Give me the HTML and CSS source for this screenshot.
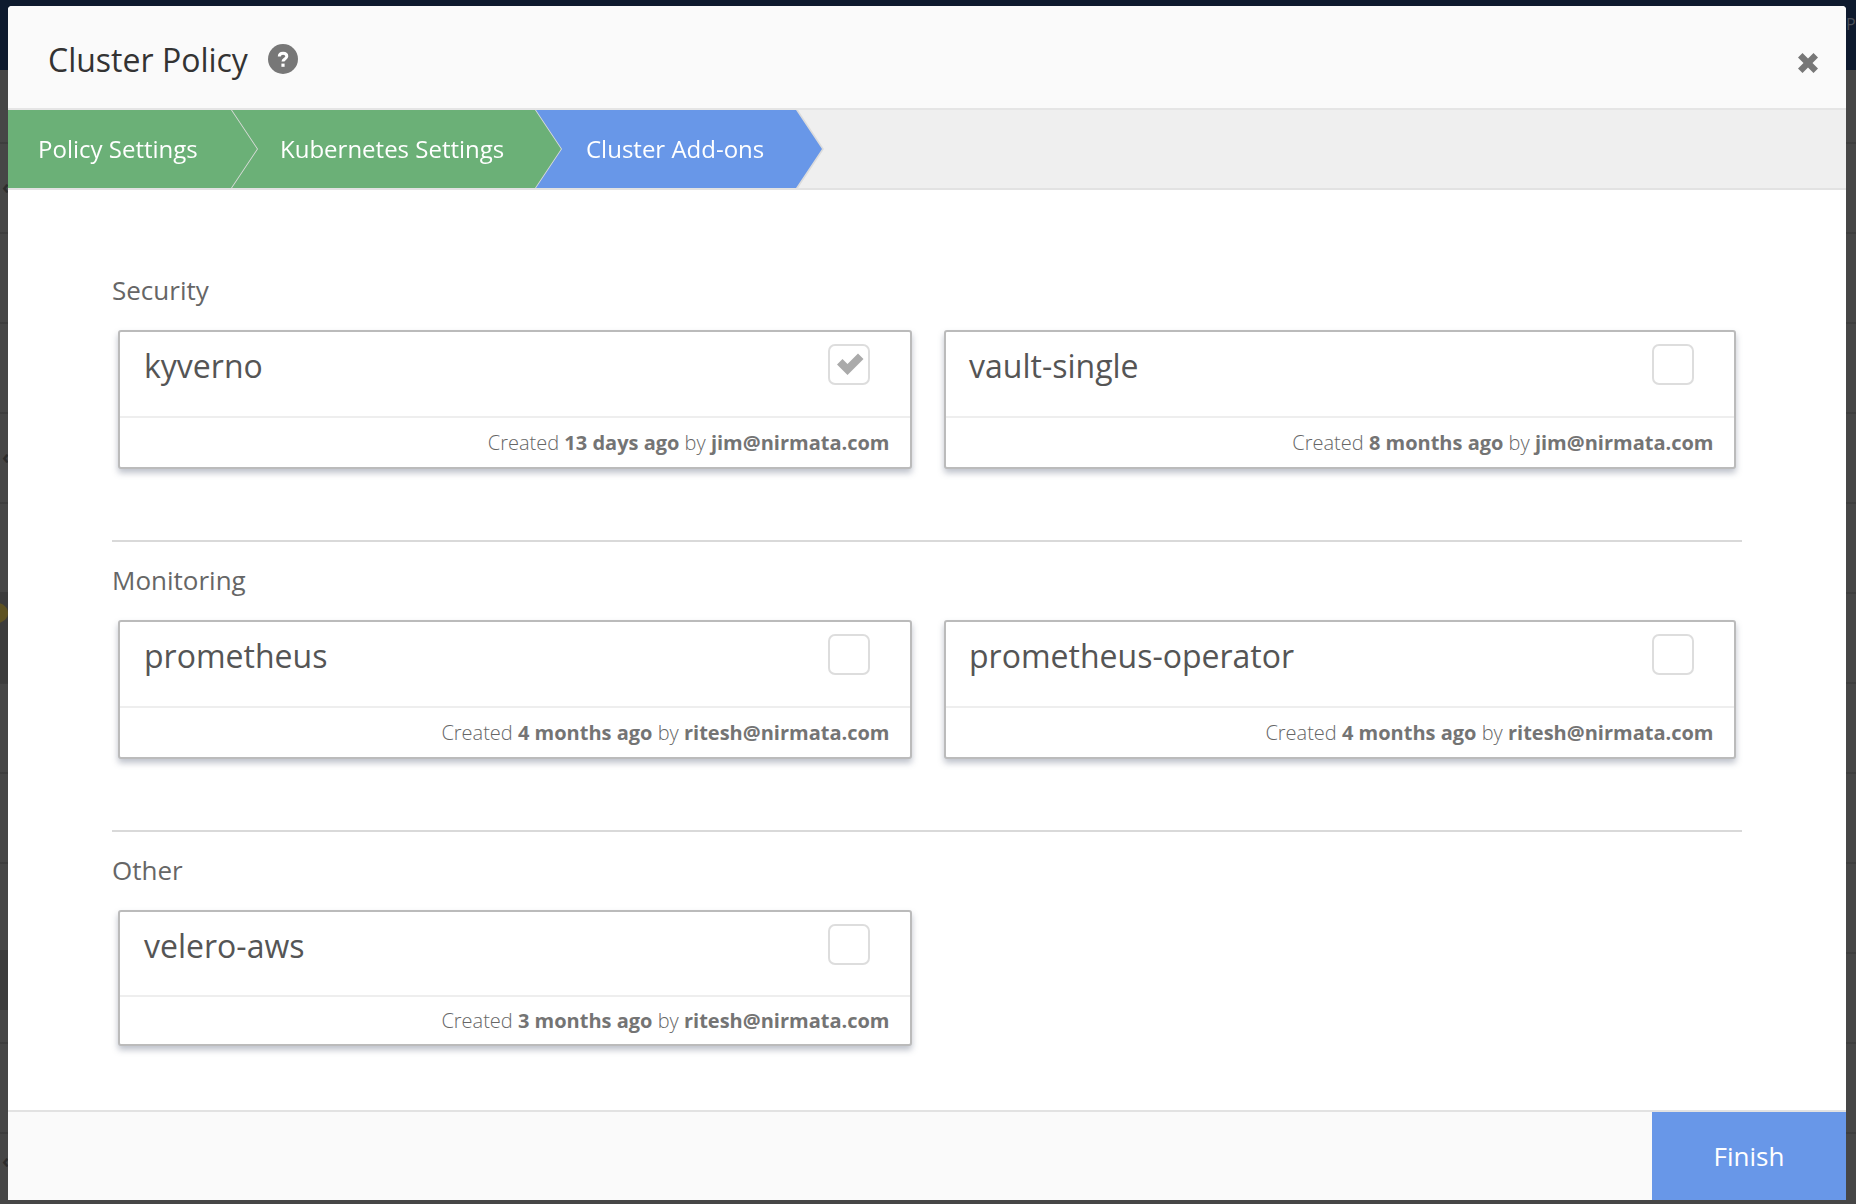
FILE: index.html
```html
<!DOCTYPE html>
<html lang="en">
<head>
    <meta charset="UTF-8">
    <meta name="viewport" content="width=device-width, initial-scale=1.0">
    <title>Cluster Policy</title>
    <link rel="stylesheet" href="styles.css">
</head>
<body>
    <div class="topbar"><span class="topbar-letter">P</span></div>
    <div class="backdrop">
        <div class="dot"></div>
        <span class="chevron chevron-a">‹</span>
        <span class="chevron chevron-b">‹</span>
        <span class="chevron chevron-c">‹</span>
    </div>

    <div class="modal">
        <div class="modal-header">
            <div class="modal-title">
                <h1>Cluster Policy</h1>
                <svg class="help-icon" width="30" height="30" viewBox="0 0 30 30">
                    <circle cx="15" cy="15" r="15" fill="#777777"/>
                    <path d="M11.300 12.600c0-2.100 1.600-3.300 3.800-3.300 2.100 0 3.700 1.100 3.700 3 0 2.700-3.800 2.600-3.800 5.200" fill="none" stroke="#ffffff" stroke-width="3"/>
                    <rect x="13.400" y="19.600" width="3.200" height="3.200" fill="#ffffff"/>
                </svg>
            </div>
            <svg class="close-icon" width="20" height="20" viewBox="0 0 20 20">
                <path d="M0 4.500l4.500-4.500 5.500 5.500 5.500-5.500 4.500 4.500-5.500 5.500 5.500 5.500-4.500 4.500-5.500-5.500-5.500 5.500-4.500-4.500 5.500-5.500z" fill="#777777"/>
            </svg>
        </div>

        <ul class="steps">
            <li class="step step-first"><span>Policy Settings</span></li>
            <li class="step step-second"><span>Kubernetes Settings</span></li>
            <li class="step step-active"><span>Cluster Add-ons</span></li>
        </ul>

        <div class="modal-body">
            <section class="group">
                <h2>Security</h2>
                <div class="cards">
                    <div class="card">
                        <div class="card-top">
                            <span class="card-name">kyverno</span>
                            <span class="checkbox">
                                <svg class="check-icon" width="27" height="22" viewBox="0 0 27 22">
                                    <path d="M0 11.500l5.500-5.500 5 5L21 .5l5.500 5.500L10.500 22z" fill="#aaaaaa"/>
                                </svg>
                            </span>
                        </div>
                        <div class="card-meta">Created <b>13 days ago</b> by <b>jim@nirmata.com</b></div>
                    </div>
                    <div class="card">
                        <div class="card-top">
                            <span class="card-name">vault-single</span>
                            <span class="checkbox"></span>
                        </div>
                        <div class="card-meta">Created <b>8 months ago</b> by <b>jim@nirmata.com</b></div>
                    </div>
                </div>
            </section>

            <section class="group">
                <h2>Monitoring</h2>
                <div class="cards">
                    <div class="card">
                        <div class="card-top">
                            <span class="card-name">prometheus</span>
                            <span class="checkbox"></span>
                        </div>
                        <div class="card-meta">Created <b>4 months ago</b> by <b>ritesh@nirmata.com</b></div>
                    </div>
                    <div class="card">
                        <div class="card-top">
                            <span class="card-name">prometheus-operator</span>
                            <span class="checkbox"></span>
                        </div>
                        <div class="card-meta">Created <b>4 months ago</b> by <b>ritesh@nirmata.com</b></div>
                    </div>
                </div>
            </section>

            <section class="group group-last">
                <h2>Other</h2>
                <div class="cards">
                    <div class="card card-short">
                        <div class="card-top">
                            <span class="card-name">velero-aws</span>
                            <span class="checkbox"></span>
                        </div>
                        <div class="card-meta">Created <b>3 months ago</b> by <b>ritesh@nirmata.com</b></div>
                    </div>
                </div>
            </section>
        </div>

        <div class="modal-footer">
            <button type="button" class="finish">Finish</button>
        </div>
    </div>
</body>
</html>
```

FILE: styles.css
```css
* {
    box-sizing: border-box;
}
html, body {
    height: 100%;
}
body {
    margin: 0;
    font-family: "Open Sans", "Noto Sans", Arial, sans-serif;
    background-color: #464646;
    overflow: hidden;
    display: flex;
    flex-direction: column;
}
.topbar {
    height: 70px;
    background-color: #0e1a2e;
    display: flex;
    justify-content: flex-end;
}
.topbar-letter {
    width: 10px;
    margin-top: 12px;
    font-size: 16px;
    line-height: 24px;
    color: #4a4f58;
}
.backdrop {
    flex: 1;
    position: relative;
    background:
        linear-gradient(#3c3c3c, #3c3c3c) 0 522px / 8px 91px no-repeat,
        linear-gradient(#3c3c3c, #3c3c3c) 0 880px / 8px 60px no-repeat,
        repeating-linear-gradient(to bottom, transparent 0, transparent 72px, rgba(0, 0, 0, 0.12) 72px, rgba(0, 0, 0, 0.12) 74px, transparent 74px, transparent 90px);
}
.dot {
    position: absolute;
    left: -14px;
    top: 533px;
    width: 22px;
    height: 20px;
    border-radius: 50%;
    background-color: #5e5222;
}
.chevron {
    position: absolute;
    left: 2px;
    font-size: 20px;
    line-height: 20px;
    font-weight: 700;
    color: #2c2c2c;
}
.chevron-a {
    top: 107px;
}
.chevron-b {
    top: 377px;
}
.chevron-c {
    top: 1081px;
}
.modal {
    position: absolute;
    left: 8px;
    top: 6px;
    width: 1838px;
    height: 1194px;
    background: #ffffff;
    border-radius: 4px 4px 0 0;
    display: flex;
    flex-direction: column;
}
.modal-header {
    height: 104px;
    flex: none;
    padding: 0 28px 0 40px;
    background-color: #fafafa;
    border-bottom: 2px solid #e5e5e5;
    border-radius: 4px 4px 0 0;
    display: flex;
    align-items: center;
    justify-content: space-between;
}
.modal-title {
    display: flex;
    align-items: center;
    gap: 20px;
    margin-top: 4px;
}
h1 {
    margin: 0;
    font-size: 32px;
    font-weight: 400;
    color: #333333;
}
.help-icon {
    display: block;
}
.close-icon {
    display: block;
    margin-top: 12px;
}
.steps {
    list-style: none;
    margin: 0;
    padding: 0;
    height: 80px;
    flex: none;
    display: flex;
    background-color: #efefef;
    border-bottom: 2px solid #e2e2e2;
}
.step {
    filter: drop-shadow(2px 0 0 #dcdcdc);
    margin-left: -25px;
}
.step span {
    display: flex;
    align-items: center;
    height: 78px;
    padding-bottom: 2px;
    font-size: 24px;
    color: #ffffff;
    background-color: #6bb077;
    clip-path: polygon(0 0, calc(100% - 26px) 0, 100% 50%, calc(100% - 26px) 100%, 0 100%, 26px 50%);
}
.step-first {
    margin-left: 0;
}
.step-first span {
    width: 249px;
    padding-left: 30px;
    clip-path: polygon(0 0, calc(100% - 26px) 0, 100% 50%, calc(100% - 26px) 100%, 0 100%);
}
.step-second span {
    width: 329px;
    padding-left: 48px;
}
.step-active span {
    width: 286px;
    padding-left: 50px;
    background-color: #6897e8;
}
.modal-body {
    flex: 1;
    padding: 0 104px;
}
.group {
    padding-top: 21px;
    padding-bottom: 71px;
    border-bottom: 2px solid #d9d9d9;
}
.group:first-child {
    padding-top: 83px;
}
.group-last {
    border-bottom: none;
    padding-bottom: 0;
}
h2 {
    margin: 0 0 23px;
    font-size: 26px;
    line-height: 34px;
    font-weight: 400;
    color: #666666;
}
.cards {
    display: grid;
    grid-template-columns: 794px 792px;
    gap: 32px;
    margin-left: 6px;
}
.card {
    height: 139px;
    border: 2px solid #bbbbbb;
    border-radius: 3px;
    background: #ffffff;
    box-shadow: 0 4px 6px rgba(110, 120, 140, 0.45);
}
.card-short {
    height: 136px;
}
.card-top {
    height: 86px;
    padding: 12px 40px 0 24px;
    border-bottom: 2px solid #eeeeee;
    display: flex;
    justify-content: space-between;
    align-items: flex-start;
}
.card-short .card-top {
    height: 85px;
}
.card-name {
    font-size: 32px;
    line-height: 44px;
    color: #555555;
}
.cards .card + .card .card-top {
    padding-left: 23px;
}
.checkbox {
    width: 42px;
    height: 41px;
    border: 2px solid #dddddd;
    border-radius: 7px;
    display: flex;
    align-items: center;
    justify-content: center;
}
.check-icon {
    margin: -2px 0 0 3px;
}
.card-meta {
    height: 49px;
    padding-right: 20.5px;
    font-size: 20px;
    font-weight: 300;
    line-height: 49px;
    text-align: right;
    color: #666666;
}
.card-short .card-meta {
    height: 47px;
    line-height: 48px;
}
.card-meta b {
    font-weight: 700;
    color: #747474;
}
.modal-footer {
    height: 90px;
    flex: none;
    background-color: #fafafa;
    border-top: 2px solid #e2e2e2;
    display: flex;
    justify-content: flex-end;
}
.finish {
    width: 194px;
    border: none;
    background-color: #6897e8;
    color: #ffffff;
    font-family: inherit;
    font-size: 26px;
    cursor: pointer;
}
```
